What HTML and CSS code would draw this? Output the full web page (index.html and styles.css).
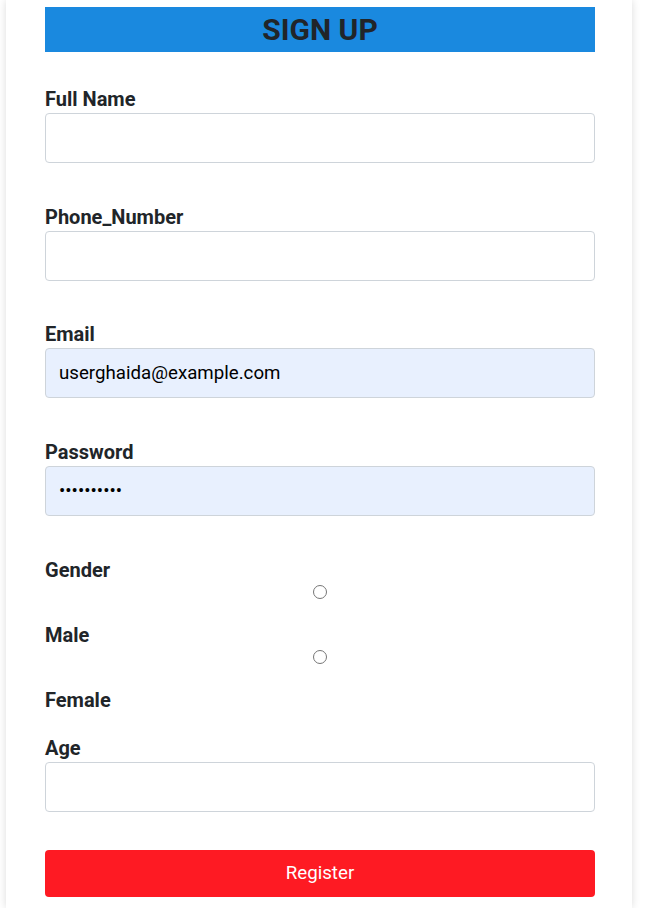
FILE: index.html
```html
<!DOCTYPE html>
<html lang="en">
<head>
<meta charset="utf-8">
<title>Sign Up</title>
<link rel="stylesheet" href="styles.css">
</head>
<body>
<div class="card">
  <h1 class="title">SIGN UP</h1>
  <form class="form">
    <div class="field">
      <label class="label" for="name">Full Name</label>
      <input class="input" id="name" type="text">
    </div>
    <div class="field">
      <label class="label" for="phone">Phone_Number</label>
      <input class="input" id="phone" type="text">
    </div>
    <div class="field">
      <label class="label" for="email">Email</label>
      <input class="input input-filled" id="email" type="email" value="userghaida@example.com">
    </div>
    <div class="field">
      <label class="label" for="pass">Password</label>
      <input class="input input-filled" id="pass" type="password" value="1234567890">
    </div>
    <div class="gender">
      <label class="label">Gender</label>
      <input class="radio" type="radio" name="g" id="male">
      <label class="label" for="male">Male</label>
      <input class="radio" type="radio" name="g" id="female">
      <label class="label" for="female">Female</label>
    </div>
    <div class="field field-age">
      <label class="label" for="age">Age</label>
      <input class="input" id="age" type="text">
    </div>
    <button class="btn" type="button">Register</button>
  </form>
</div>
</body>
</html>
```

FILE: styles.css
```css
html, body {
  margin: 0;
  padding: 0;
  background: #ffffff;
}
body {
  font-family: Roboto, "Liberation Sans", Arial, sans-serif;
  color: #212529;
  height: 908px;
  overflow: hidden;
}
.card {
  margin-left: 6px;
  width: 626px;
  min-height: 908px;
  box-sizing: border-box;
  padding: 7px 37px 0 39px;
  background: #ffffff;
  box-shadow: 0 0 8px rgba(0, 0, 0, 0.14);
}
.title {
  margin: 0;
  height: 45px;
  line-height: 45px;
  background: #1a89df;
  color: #212529;
  font-size: 30px;
  font-weight: 700;
  text-align: center;
}
.form {
  display: flex;
  flex-direction: column;
  padding-top: 36px;
}
.field {
  display: flex;
  flex-direction: column;
  gap: 3px;
  margin-bottom: 42.67px;
}
.label {
  display: block;
  font-size: 20px;
  line-height: 22px;
  font-weight: 700;
  color: #212529;
}
.input {
  box-sizing: border-box;
  width: 100%;
  height: 50px;
  margin: 0;
  padding: 0 13px;
  border: 1px solid #ced4da;
  border-radius: 4px;
  background: #ffffff;
  font-family: Roboto, "Liberation Sans", Arial, sans-serif;
  font-size: 18.7px;
  color: #000000;
  outline: none;
}
.input-filled {
  background: #e8f0fe;
}
.gender {
  display: flex;
  flex-direction: column;
  align-items: flex-start;
}
.radio {
  appearance: none;
  -webkit-appearance: none;
  align-self: center;
  box-sizing: border-box;
  width: 14px;
  height: 14px;
  margin: 4px 0 25px;
  border: 1px solid #767676;
  border-radius: 50%;
  background: #ffffff;
}
.field-age {
  margin-top: 26px;
  margin-bottom: 38px;
}
.btn {
  height: 47px;
  width: 100%;
  border: none;
  border-radius: 4px;
  background: #fe1a23;
  color: #ffffff;
  font-family: Roboto, "Liberation Sans", Arial, sans-serif;
  font-size: 18.7px;
  font-weight: 400;
  cursor: pointer;
}
```
